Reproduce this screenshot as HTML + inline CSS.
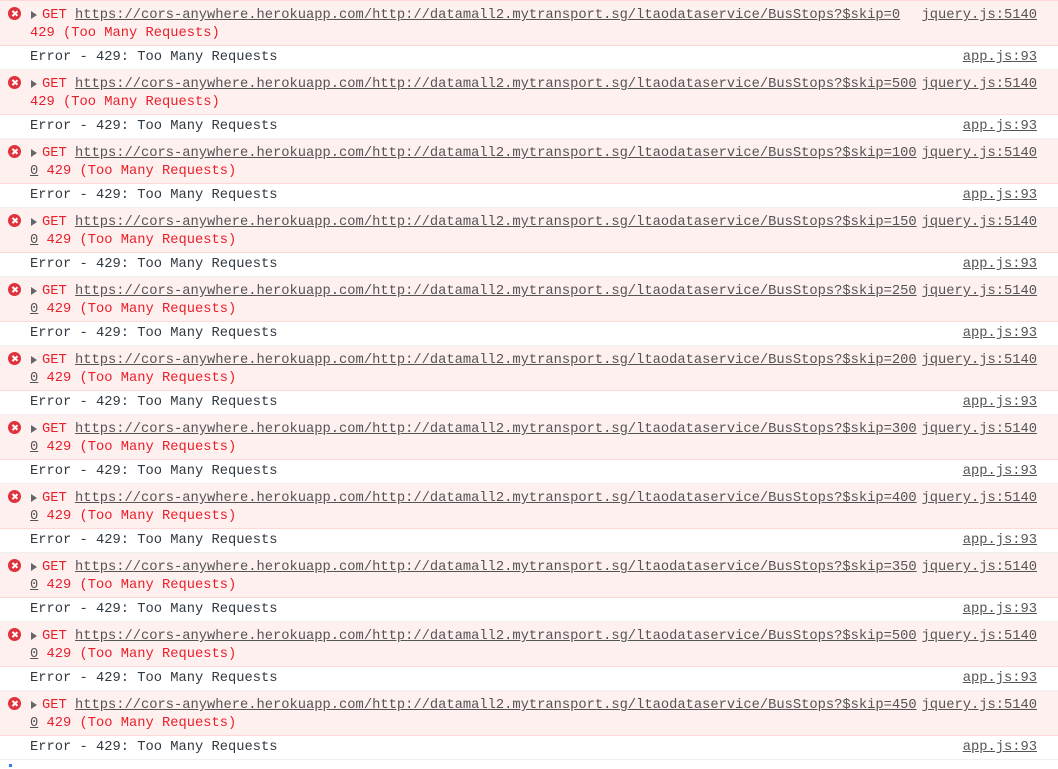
<!DOCTYPE html>
<html><head><meta charset="utf-8"><style>
*{margin:0;padding:0;box-sizing:border-box}
body{width:1058px;height:769px;overflow:hidden;background:#fff;font-family:"Liberation Mono",monospace;font-size:13.75px;line-height:18px;position:relative}
.e{position:relative;height:45px;background:#fff0f0;border-bottom:1px solid #ffd7d7;color:#e8202a}
.l{position:relative;height:24px;border-bottom:1px solid #f0f0f0;color:#303942}
.ic{position:absolute;left:8px;top:6px;width:13px;height:13px;border-radius:50%;background:#e0323c}
.ic:before,.ic:after{content:"";position:absolute;left:6px;top:3px;width:1.6px;height:7px;background:#fff;transform:rotate(45deg)}
.ic:after{transform:rotate(-45deg)}
.tri{position:absolute;left:31px;top:10px;width:0;height:0;border-left:6px solid #666;border-top:4px solid transparent;border-bottom:4px solid transparent}
.t1{position:absolute;left:42px;top:6px;white-space:pre}
.t2{position:absolute;left:30px;top:24px;white-space:pre}
.u{color:#545454;text-decoration:underline}
.r{position:absolute;right:21px;top:6px;color:#545454;text-decoration:underline}
.lt{position:absolute;left:30px;top:3px;white-space:pre}
.lr{position:absolute;right:21px;top:3px;color:#545454;text-decoration:underline}
</style></head><body>
<div class="e" style="border-top:1px solid #ffd7d7;height:46px"><div class="ic"></div><div class="tri"></div><div class="t1">GET <span class="u">https://cors-anywhere.herokuapp.com/http://datamall2.mytransport.sg/ltaodataservice/BusStops?$skip=0</span></div><div class="r">jquery.js:5140</div><div class="t2">429 (Too Many Requests)</div></div>
<div class="l"><div class="lt">Error - 429: Too Many Requests</div><div class="lr">app.js:93</div></div>
<div class="e"><div class="ic"></div><div class="tri"></div><div class="t1">GET <span class="u">https://cors-anywhere.herokuapp.com/http://datamall2.mytransport.sg/ltaodataservice/BusStops?$skip=500</span></div><div class="r">jquery.js:5140</div><div class="t2">429 (Too Many Requests)</div></div>
<div class="l"><div class="lt">Error - 429: Too Many Requests</div><div class="lr">app.js:93</div></div>
<div class="e"><div class="ic"></div><div class="tri"></div><div class="t1">GET <span class="u">https://cors-anywhere.herokuapp.com/http://datamall2.mytransport.sg/ltaodataservice/BusStops?$skip=100</span></div><div class="r">jquery.js:5140</div><div class="t2"><span class="u">0</span> 429 (Too Many Requests)</div></div>
<div class="l"><div class="lt">Error - 429: Too Many Requests</div><div class="lr">app.js:93</div></div>
<div class="e"><div class="ic"></div><div class="tri"></div><div class="t1">GET <span class="u">https://cors-anywhere.herokuapp.com/http://datamall2.mytransport.sg/ltaodataservice/BusStops?$skip=150</span></div><div class="r">jquery.js:5140</div><div class="t2"><span class="u">0</span> 429 (Too Many Requests)</div></div>
<div class="l"><div class="lt">Error - 429: Too Many Requests</div><div class="lr">app.js:93</div></div>
<div class="e"><div class="ic"></div><div class="tri"></div><div class="t1">GET <span class="u">https://cors-anywhere.herokuapp.com/http://datamall2.mytransport.sg/ltaodataservice/BusStops?$skip=250</span></div><div class="r">jquery.js:5140</div><div class="t2"><span class="u">0</span> 429 (Too Many Requests)</div></div>
<div class="l"><div class="lt">Error - 429: Too Many Requests</div><div class="lr">app.js:93</div></div>
<div class="e"><div class="ic"></div><div class="tri"></div><div class="t1">GET <span class="u">https://cors-anywhere.herokuapp.com/http://datamall2.mytransport.sg/ltaodataservice/BusStops?$skip=200</span></div><div class="r">jquery.js:5140</div><div class="t2"><span class="u">0</span> 429 (Too Many Requests)</div></div>
<div class="l"><div class="lt">Error - 429: Too Many Requests</div><div class="lr">app.js:93</div></div>
<div class="e"><div class="ic"></div><div class="tri"></div><div class="t1">GET <span class="u">https://cors-anywhere.herokuapp.com/http://datamall2.mytransport.sg/ltaodataservice/BusStops?$skip=300</span></div><div class="r">jquery.js:5140</div><div class="t2"><span class="u">0</span> 429 (Too Many Requests)</div></div>
<div class="l"><div class="lt">Error - 429: Too Many Requests</div><div class="lr">app.js:93</div></div>
<div class="e"><div class="ic"></div><div class="tri"></div><div class="t1">GET <span class="u">https://cors-anywhere.herokuapp.com/http://datamall2.mytransport.sg/ltaodataservice/BusStops?$skip=400</span></div><div class="r">jquery.js:5140</div><div class="t2"><span class="u">0</span> 429 (Too Many Requests)</div></div>
<div class="l"><div class="lt">Error - 429: Too Many Requests</div><div class="lr">app.js:93</div></div>
<div class="e"><div class="ic"></div><div class="tri"></div><div class="t1">GET <span class="u">https://cors-anywhere.herokuapp.com/http://datamall2.mytransport.sg/ltaodataservice/BusStops?$skip=350</span></div><div class="r">jquery.js:5140</div><div class="t2"><span class="u">0</span> 429 (Too Many Requests)</div></div>
<div class="l"><div class="lt">Error - 429: Too Many Requests</div><div class="lr">app.js:93</div></div>
<div class="e"><div class="ic"></div><div class="tri"></div><div class="t1">GET <span class="u">https://cors-anywhere.herokuapp.com/http://datamall2.mytransport.sg/ltaodataservice/BusStops?$skip=500</span></div><div class="r">jquery.js:5140</div><div class="t2"><span class="u">0</span> 429 (Too Many Requests)</div></div>
<div class="l"><div class="lt">Error - 429: Too Many Requests</div><div class="lr">app.js:93</div></div>
<div class="e"><div class="ic"></div><div class="tri"></div><div class="t1">GET <span class="u">https://cors-anywhere.herokuapp.com/http://datamall2.mytransport.sg/ltaodataservice/BusStops?$skip=450</span></div><div class="r">jquery.js:5140</div><div class="t2"><span class="u">0</span> 429 (Too Many Requests)</div></div>
<div class="l"><div class="lt">Error - 429: Too Many Requests</div><div class="lr">app.js:93</div></div>
<div style="position:absolute;left:9px;top:764px;width:3px;height:3px;background:#367cf1"></div>
</body></html>
